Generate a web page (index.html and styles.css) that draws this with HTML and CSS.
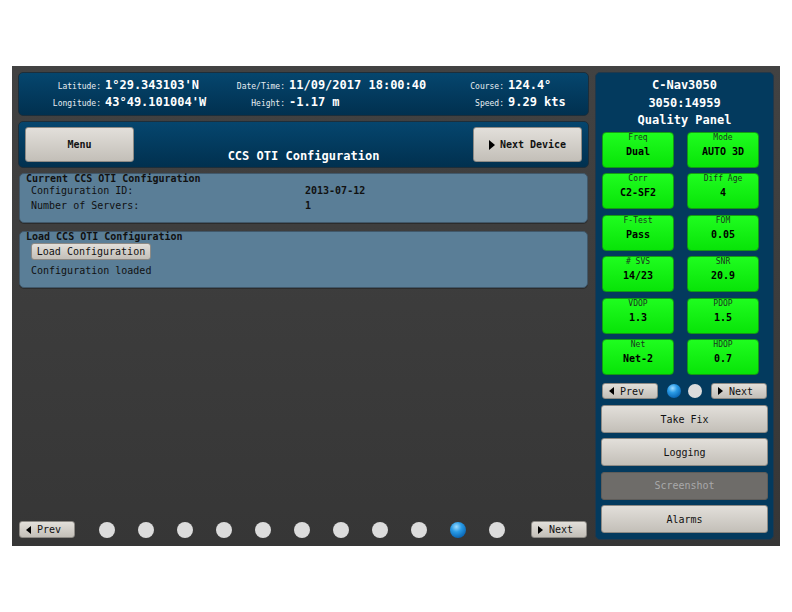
FILE: index.html
```html
<!DOCTYPE html>
<html>
<head>
<meta charset="utf-8">
<link rel="stylesheet" href="styles.css">
</head>
<body>
<div class="frame">
  <div class="main">
    <div class="info">
      <span class="lbl">Latitude:</span><span class="val">1°29.343103'N</span>
      <span class="lbl">Date/Time:</span><span class="val">11/09/2017 18:00:40</span>
      <span class="lbl">Course:</span><span class="val">124.4°</span>
      <span class="lbl">Longitude:</span><span class="val">43°49.101004'W</span>
      <span class="lbl">Height:</span><span class="val">-1.17 m</span>
      <span class="lbl">Speed:</span><span class="val">9.29 kts</span>
    </div>
    <div class="header">
      <button class="btn big">Menu</button>
      <div class="title">CCS OTI Configuration</div>
      <button class="btn big"><span class="tri-r"></span>Next Device</button>
    </div>
    <div class="group g1">
      <div class="gtitle">Current CCS OTI Configuration</div>
      <div class="rows">
        <span>Configuration ID:</span><span class="v">2013-07-12</span>
        <span>Number of Servers:</span><span class="v">1</span>
      </div>
    </div>
    <div class="group g2">
      <div class="gtitle">Load CCS OTI Configuration</div>
      <button class="btn load">Load Configuration</button>
      <div class="status">Configuration loaded</div>
    </div>
    <div class="pager">
      <button class="btn small"><span class="tri-l"></span>Prev</button>
      <div class="dots">
        <span class="dot"></span><span class="dot"></span><span class="dot"></span><span class="dot"></span><span class="dot"></span><span class="dot"></span><span class="dot"></span><span class="dot"></span><span class="dot"></span><span class="dot on"></span><span class="dot"></span>
      </div>
      <button class="btn small next"><span class="tri-r"></span>Next</button>
    </div>
  </div>
  <div class="side">
    <div class="stitle">C-Nav3050<br>3050:14959<br>Quality Panel</div>
    <div class="tiles">
      <div class="tile"><span class="tl">Freq</span><span class="tv">Dual</span></div>
      <div class="tile"><span class="tl">Mode</span><span class="tv">AUTO 3D</span></div>
      <div class="tile"><span class="tl">Corr</span><span class="tv">C2-SF2</span></div>
      <div class="tile"><span class="tl">Diff Age</span><span class="tv">4</span></div>
      <div class="tile"><span class="tl">F-Test</span><span class="tv">Pass</span></div>
      <div class="tile"><span class="tl">FOM</span><span class="tv">0.05</span></div>
      <div class="tile"><span class="tl"># SVS</span><span class="tv">14/23</span></div>
      <div class="tile"><span class="tl">SNR</span><span class="tv">20.9</span></div>
      <div class="tile"><span class="tl">VDOP</span><span class="tv">1.3</span></div>
      <div class="tile"><span class="tl">PDOP</span><span class="tv">1.5</span></div>
      <div class="tile"><span class="tl">Net</span><span class="tv">Net-2</span></div>
      <div class="tile"><span class="tl">HDOP</span><span class="tv">0.7</span></div>
    </div>
    <div class="snav">
      <button class="btn small"><span class="tri-l"></span>Prev</button>
      <span class="sdot on"></span>
      <span class="sdot"></span>
      <button class="btn small"><span class="tri-r"></span>Next</button>
    </div>
    <div class="actions">
      <button class="btn act">Take Fix</button>
      <button class="btn act">Logging</button>
      <button class="btn act disabled">Screenshot</button>
      <button class="btn act">Alarms</button>
    </div>
  </div>
</div>
</body>
</html>
```

FILE: styles.css
```css
* { box-sizing: border-box; }
html, body { margin: 0; padding: 0; background: #ffffff; }
body { font-family: "DejaVu Sans Mono", "Liberation Mono", monospace; }

.frame {
  margin: 66px 0 0 12px;
  width: 768px;
  height: 480px;
  background: linear-gradient(#424242, #363636);
  padding: 6px;
  display: flex;
  gap: 6px;
}

.main {
  width: 571px;
  display: flex;
  flex-direction: column;
}

.info {
  height: 44px;
  border-radius: 5px;
  background: linear-gradient(#05466e, #01304f);
  border: 1px solid #1d2e3a;
  padding: 4px 0 0 0;
  display: grid;
  grid-template-columns: 82px 118px 66px 153px 66px 1fr;
  grid-auto-rows: 17px;
  align-items: baseline;
  color: #fff;
}
.info .lbl { font-size: 8px; text-align: right; color: #e8eef2; }
.info .val { font-size: 12px; font-weight: bold; padding-left: 4px; white-space: nowrap; line-height: 17px; }

.header {
  margin-top: 5px;
  height: 47px;
  border-radius: 5px;
  background: linear-gradient(#05466e, #01304f);
  border: 1px solid #1d2e3a;
  padding: 5px 6px 4px 6px;
  display: flex;
  align-items: flex-start;
}
.title {
  flex: 1;
  align-self: flex-end;
  text-align: center;
  color: #fff;
  font-size: 12px;
  font-weight: bold;
  line-height: 14px;
}

.btn {
  font-family: "DejaVu Sans Mono", "Liberation Mono", monospace;
  color: #111;
  background: linear-gradient(#e2dfda, #c3bfb8);
  border: 1px solid #8d8a85;
  border-radius: 3px;
  padding: 0;
  display: flex;
  align-items: center;
  justify-content: center;
  gap: 5px;
}
.btn.big { width: 109px; height: 35px; font-size: 10px; font-weight: bold; }
.tri-r, .tri-l { width: 0; height: 0; border-top: 5px solid transparent; border-bottom: 5px solid transparent; }
.tri-r { border-left: 6px solid #000; }
.tri-l { border-right: 6px solid #000; }

.group {
  margin: 5px 1px 0 1px;
  background: #5a7e97;
  border: 1px solid #41586a;
  border-radius: 5px;
  box-shadow: 0 1px 0 #2c2c2c;
  color: #111;
  font-size: 10px;
}
.gtitle { font-weight: bold; line-height: 10px; padding-left: 6px; }
.g1 { height: 50px; }
.g2 { height: 57px; margin-top: 8px; }
.rows {
  display: grid;
  grid-template-columns: 274px auto;
  padding-left: 11px;
  line-height: 15px;
  margin-top: -1px;
}
.rows .v { font-weight: bold; }
.btn.load {
  margin: 1px 0 0 11px;
  width: 120px;
  height: 17px;
  font-size: 10px;
}
.status { padding-left: 11px; margin-top: 4px; line-height: 14px; }

.pager {
  margin-top: auto;
  margin-bottom: 2px;
  margin-left: 1px;
  margin-right: 2px;
  display: flex;
  align-items: center;
}
.btn.small { width: 56px; height: 17px; font-size: 10px; gap: 6px; justify-content: flex-start; padding-left: 6px; }
.btn.small .tri-r, .btn.small .tri-l { border-top-width: 4px; border-bottom-width: 4px; border-left-width: 5px; border-right-width: 5px; }
.btn.small .tri-l { border-left-width: 0; }
.btn.small .tri-r { border-right-width: 0; }
.dots { display: flex; gap: 23px; margin-left: 24px; }
.dot { width: 16px; height: 16px; border-radius: 50%; background: #dcdcdc; }
.dot.on, .sdot.on {
  background: radial-gradient(circle at 40% 30%, #9fdcff 0%, #2a9be6 35%, #0661b0 80%, #054a88 100%);
}
.next { margin-left: auto; }

.side {
  width: 179px;
  height: 468px;
  background: #033a5e;
  border: 1px solid #22384a;
  border-radius: 5px;
  padding: 4px 0 0 0;
  display: flex;
  flex-direction: column;
}
.stitle {
  color: #fff;
  font-size: 12px;
  font-weight: bold;
  text-align: center;
  line-height: 17.5px;
}
.tiles {
  margin: 2px 0 0 6px;
  display: grid;
  grid-template-columns: 72px 72px;
  column-gap: 13px;
  grid-auto-rows: 36px;
  row-gap: 5.5px;
}
.tile {
  background: linear-gradient(#1ffd1f, #08e408);
  border: 1px solid #139a13;
  border-radius: 4px;
  display: flex;
  flex-direction: column;
  align-items: center;
}
.tl { font-size: 8px; color: #1a3320; line-height: 10px; }
.tv { font-size: 10px; font-weight: bold; color: #000; line-height: 18px; }

.snav {
  margin: 8px 0 0 6px;
  display: flex;
  align-items: center;
}
.snav .btn.small { width: 56px; height: 16px; }
.sdot { width: 14px; height: 14px; border-radius: 50%; background: #dcdcdc; margin-left: 9px; }
.sdot + .sdot { margin-left: 7px; }
.sdot + .btn { margin-left: 9px; }

.actions {
  margin: 6px 0 0 5px;
  display: flex;
  flex-direction: column;
  gap: 5.4px;
}
.btn.act { width: 167px; height: 28px; font-size: 10px; }
.btn.disabled { background: #6e6c69; border-color: #5e5c59; color: #a9a9a9; }
```
